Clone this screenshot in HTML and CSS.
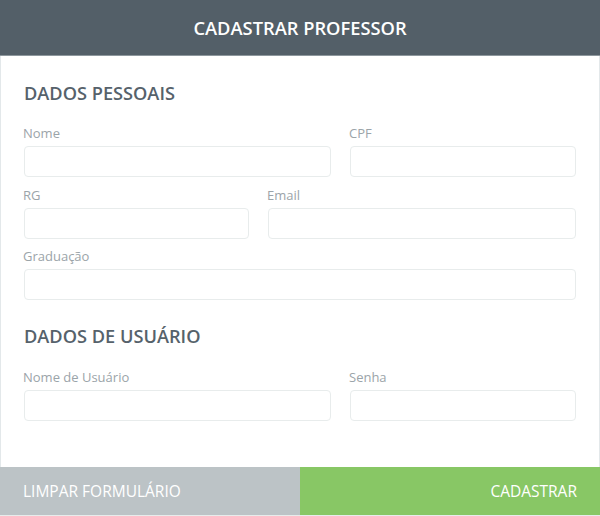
FILE: index.html
```html
<!DOCTYPE html>
<html lang="pt-BR">
<head>
<meta charset="utf-8">
<title>Cadastrar Professor</title>
<link rel="stylesheet" href="styles.css">
</head>
<body>
<div class="card">
  <header class="card-header">CADASTRAR PROFESSOR</header>
  <form class="card-body">
    <h2 class="section-title first">DADOS PESSOAIS</h2>
    <div class="row row-a">
      <label class="field"><span class="label">Nome</span><input class="input" type="text"></label>
      <label class="field"><span class="label">CPF</span><input class="input" type="text"></label>
    </div>
    <div class="row row-b">
      <label class="field"><span class="label">RG</span><input class="input" type="text"></label>
      <label class="field"><span class="label">Email</span><input class="input" type="text"></label>
    </div>
    <div class="row row-c">
      <label class="field"><span class="label">Graduação</span><input class="input" type="text"></label>
    </div>
    <h2 class="section-title second">DADOS DE USUÁRIO</h2>
    <div class="row row-a">
      <label class="field"><span class="label">Nome de Usuário</span><input class="input" type="text"></label>
      <label class="field"><span class="label">Senha</span><input class="input" type="password"></label>
    </div>
  </form>
  <div class="actions">
    <button class="btn btn-clear" type="button">LIMPAR FORMULÁRIO</button>
    <button class="btn btn-submit" type="button">CADASTRAR</button>
  </div>
</div>
</body>
</html>
```
FILE: styles.css
```css
* { box-sizing: border-box; }
html, body { margin: 0; padding: 0; background: #fff; }
body { font-family: "Open Sans", "Noto Sans", sans-serif; }

.card { width: 600px; height: 516px; display: flex; flex-direction: column; }

.card-header {
  height: 56px;
  background: #535f68;
  border-bottom: 1px solid #8d979d;
  color: #fff;
  font-size: 18.3px;
  font-weight: 600;
  display: flex;
  align-items: center;
  justify-content: center;
}

.card-body {
  margin: 0;
  height: 411px;
  border-left: 1px solid #e3e8ea;
  border-right: 1px solid #e3e8ea;
  padding: 0 23px;
  display: flex;
  flex-direction: column;
}

.section-title {
  margin: 0;
  font-size: 18.2px;
  font-weight: 600;
  color: #56626b;
  line-height: 24px;
}
.section-title.first { padding-top: 25px; margin-bottom: 19px; }
.section-title.second { padding-top: 15px; margin-bottom: 20px; }

.row { display: grid; column-gap: 19px; margin-bottom: 8.5px; }
.row-a { grid-template-columns: 307px 1fr; }
.row-b { grid-template-columns: 225px 1fr; }
.row-c { grid-template-columns: 1fr; }

.field { display: flex; flex-direction: column; }
.label {
  font-size: 13px;
  color: #9ba4a9;
  line-height: 18px;
  margin-bottom: 4px;
  margin-left: -1px;
}
.input {
  height: 31px;
  border: 1px solid #e8ecec;
  border-radius: 4px;
  background: #fff;
  margin: 0;
  outline: none;
  font: inherit;
}

.actions { display: flex; height: 49px; border-bottom: 1px solid #e8ecec; }
.btn {
  flex: 1;
  border: 0;
  margin: 0;
  color: #fff;
  font-family: inherit;
  font-size: 15.5px;
  font-weight: 400;
  display: flex;
  align-items: center;
  padding: 0 23px;
  cursor: pointer;
}
.btn-clear { background: #bcc3c6; justify-content: flex-start; }
.btn-submit { background: #88c765; justify-content: flex-end; }
```
